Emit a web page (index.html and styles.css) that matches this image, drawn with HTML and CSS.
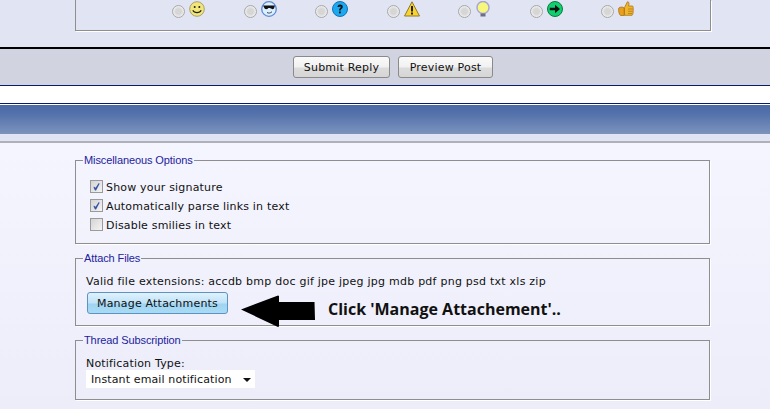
FILE: index.html
```html
<!DOCTYPE html>
<html lang="en">
<head>
<meta charset="utf-8">
<title>Reply</title>
<link rel="stylesheet" href="styles.css">
</head>
<body>
<section class="top">
  <div class="icons-box">
    <label class="pick"><input type="radio" name="icon"><svg class="ic" viewBox="0 0 16 16"><circle cx="8" cy="8" r="7.3" fill="#f3e678" stroke="#a8a070"/><circle cx="5.7" cy="6" r="1" fill="#222"/><circle cx="10.3" cy="6" r="1" fill="#222"/><path d="M3.8 9.2c1.500 3.200 6.900 3.200 8.400 0" fill="none" stroke="#222" stroke-width="1.1"/></svg></label>
    <label class="pick"><input type="radio" name="icon"><svg class="ic" viewBox="0 0 16 16"><circle cx="8" cy="8" r="7.3" fill="#dcefff" stroke="#5c8ad0" stroke-width="1.3"/><path d="M2 4.500h12L13 7.600c-1 .9-3 .8-3.700-.6H7.300c-.7 1.400-2.700 1.500-3.700.6z" fill="#111"/><path d="M6 11.500c1.500 1 3.500.7 5-.8" fill="none" stroke="#345" stroke-width="1"/></svg></label>
    <label class="pick"><input type="radio" name="icon"><svg class="ic" viewBox="0 0 16 16"><circle cx="8" cy="8" r="7.500" fill="#1ba8ee" stroke="#1273b8"/><path d="M5.500 6c0-3.300 5.300-3.300 5.300-.2 0 1.900-2.100 1.900-2.100 3.700H7c0-2.500 1.700-2.500 1.700-3.600 0-1-1.300-1-1.300.1z" fill="#111"/><rect x="7" y="10.500" width="1.800" height="1.800" fill="#111"/></svg></label>
    <label class="pick"><input type="radio" name="icon"><svg class="ic" viewBox="0 0 16 16"><path d="M8 .8 15.500 15H.5z" fill="#fbd32e" stroke="#8f7a2c" stroke-linejoin="round"/><rect x="7" y="5" width="2" height="5.500" fill="#222"/><rect x="7" y="11.500" width="2" height="2" fill="#222"/></svg></label>
    <label class="pick"><input type="radio" name="icon"><svg class="ic" viewBox="0 0 16 16"><circle cx="8" cy="6.500" r="6" fill="#f7f77c" stroke="#a9a7d0" stroke-width="1.500"/><rect x="5.500" y="12.500" width="5" height="3" fill="#6d6d88"/></svg></label>
    <label class="pick"><input type="radio" name="icon"><svg class="ic" viewBox="0 0 16 16"><circle cx="8" cy="8" r="7.500" fill="#0fcf6f" stroke="#0a7a42"/><path d="M2.800 6.800h5.200V3.800L13 8l-5 4.200V9.200H2.800z" fill="#111"/></svg></label>
    <label class="pick"><input type="radio" name="icon"><svg class="ic" viewBox="0 0 16 16"><path d="M6.500 6.500 9.500.7c1.800.3 1.800 1.900 1 4.300h4.100c1 .5.800 8.700-.5 9.300H6.500z" fill="#f2b52a" stroke="#a8741a" stroke-width=".8"/><path d="M.8 7c1.700-1.300 4.200-1.200 5.400 0v7.500H2.500C1 13.500.3 9.500.8 7z" fill="#e89f1c" stroke="#a8741a" stroke-width=".8"/><path d="M10 8h4.500M10 10.300h4.500M10 12.500h4" stroke="#a8741a" stroke-width=".7"/></svg></label>
  </div>
</section>

<section class="submit-bar">
  <button class="btn" type="button">Submit Reply</button>
  <button class="btn" type="button">Preview Post</button>
</section>

<div class="spacer"></div>

<div class="head-strip"></div>
<div class="sub-strip"></div>

<main class="options">
  <fieldset class="group misc">
    <legend>Miscellaneous Options</legend>
    <label class="check"><input type="checkbox" checked>Show your signature</label>
    <label class="check"><input type="checkbox" checked>Automatically parse links in text</label>
    <label class="check"><input type="checkbox">Disable smilies in text</label>
  </fieldset>

  <fieldset class="group attach">
    <legend>Attach Files</legend>
    <p class="ext">Valid file extensions: accdb bmp doc gif jpe jpeg jpg mdb pdf png psd txt xls zip</p>
    <button class="btn-blue" type="button">Manage Attachments</button>
    <svg class="arrow" viewBox="0 0 76 32"><path d="M1 14.500 38 0.500 39 1V7H74.500L75 25H39V31.500L38 32z" fill="#000"/></svg>
    <span class="note">Click 'Manage Attachement'..</span>
  </fieldset>

  <fieldset class="group thread">
    <legend>Thread Subscription</legend>
    <div class="field-label">Notification Type:</div>
    <div class="select-wrap">
      <select class="select"><option>Instant email notification</option></select>
    </div>
  </fieldset>
</main>
</body>
</html>
```

FILE: styles.css
```css
* { box-sizing: border-box; }

html, body {
  margin: 0;
  height: 409px;
  overflow: hidden;
}

body {
  background: #fff;
  color: #111;
  font: 11px "DejaVu Sans", Verdana, sans-serif;
  letter-spacing: 0.18px;
}

.top {
  height: 47px;
  background: #e1e4f3;
}

.icons-box {
  display: flex;
  width: 636px;
  height: 31px;
  margin-left: 75px;
  padding: 1px 0 0 96px;
  border: 1px solid #8e8e8e;
  border-top: 0;
  box-shadow: 1px 1px 0 #fff;
}

.pick {
  display: flex;
  flex: 0 0 71.5px;
  align-items: flex-start;
}

.pick input {
  appearance: none;
  width: 13px;
  height: 13px;
  margin: 4px 4px 0 0;
  border: 1px solid #a8a8a8;
  border-radius: 50%;
  background: radial-gradient(circle at 50% 50%, #d6d6d6 0 35%, #eeeeee 70%, #fafafa 100%);
}

.ic {
  display: block;
  width: 16px;
  height: 16px;
}

.submit-bar {
  display: flex;
  justify-content: center;
  gap: 8px;
  height: 39px;
  padding-top: 7px;
  padding-left: 16px;
  background: #d1d3e0;
  border-top: 2px solid #000;
  border-bottom: 1px solid #0a1a6e;
}

.btn {
  width: 97px;
  height: 22px;
  padding: 0;
  border: 1px solid #8a8a8a;
  border-radius: 3px;
  background: linear-gradient(#fafafa 0, #f1f1f1 50%, #dcdcdc 55%, #d6d6d6 100%);
  color: #111;
  font: 11px "DejaVu Sans", Verdana, sans-serif;
  letter-spacing: 0.2px;
}

.btn + .btn { width: 95px; }

.spacer {
  height: 17px;
  background: #fff;
}

.head-strip {
  height: 31px;
  border-top: 1px solid #0a1a6e;
  background: linear-gradient(#fff 0 1px, #4c6ba5 1px, #5270aa 30%, #7c93bd 100%);
}

.sub-strip {
  height: 9px;
  background: #e1e4f3;
  border-bottom: 2px solid #b0b0b8;
}

.options {
  display: flex;
  flex-direction: column;
  height: 266px;
  padding: 11px 60px 0 75px;
  background: linear-gradient(#f5f5ff, #ecedf9);
}

.group {
  position: relative;
  width: 635px;
  margin: 0;
  padding: 0 10px;
  border: 1px solid #8e8e8e;
  box-shadow: 1px 1px 0 #fff;
}

.group legend {
  margin-left: -3px;
  padding: 0 1px;
  color: #22229c;
  font: 11px "Liberation Sans", Arial, sans-serif;
  letter-spacing: -0.1px;
  line-height: 13px;
}

.misc {
  height: 90px;
  padding: 11px 14px 0;
}

.misc legend {
  margin-left: -7px;
}

.check {
  display: flex;
  align-items: center;
  height: 19px;
}

.check input {
  appearance: none;
  position: relative;
  width: 13px;
  height: 13px;
  margin: -2px 3px 0 0;
  border: 1px solid #9a9a9a;
  background: linear-gradient(135deg, #d4d4d4, #f4f4f4);
}

.check input:checked::after {
  content: "";
  position: absolute;
  inset: 1px;
  background: #3a55a8;
  clip-path: polygon(20% 50%, 40% 65%, 75% 10%, 85% 20%, 45% 95%, 33% 95%, 18% 65%);
}

.attach {
  height: 74px;
  margin-top: 8px;
  padding: 10px 10px 0;
}

.ext {
  margin: 0;
  letter-spacing: 0.24px;
  line-height: 14px;
}

.btn-blue {
  display: block;
  width: 141px;
  height: 22px;
  margin: 3px 0 0 1px;
  padding: 0;
  border: 1px solid #5f93bf;
  border-radius: 3px;
  background: linear-gradient(#dff2fc 0, #bfe3f7 50%, #9fd4f1 55%, #a8dbf5 100%);
  color: #111;
  font: 11px "DejaVu Sans", Verdana, sans-serif;
  letter-spacing: 0.2px;
}

.arrow {
  position: absolute;
  left: 164px;
  top: 30px;
  width: 76px;
  height: 32px;
}

.note {
  position: absolute;
  left: 252px;
  top: 33px;
  color: #111;
  font: 700 16px "Open Sans", sans-serif;
  letter-spacing: 0;
  white-space: nowrap;
}

.thread {
  height: 66px;
  margin-top: 8px;
  padding: 10px 10px 0;
}

.field-label {
  line-height: 13px;
}

.select-wrap {
  position: relative;
  width: 169px;
  height: 18px;
}

.select-wrap::after {
  content: "";
  position: absolute;
  right: 4px;
  top: 8px;
  border: 4px solid transparent;
  border-top-color: #111;
  border-bottom: 0;
}

.select {
  appearance: none;
  display: block;
  width: 100%;
  height: 18px;
  padding: 0 0 0 5px;
  border: 0;
  border-radius: 0;
  background: #fff;
  color: #111;
  font: 11px "DejaVu Sans", Verdana, sans-serif;
  letter-spacing: 0.12px;
}
```
